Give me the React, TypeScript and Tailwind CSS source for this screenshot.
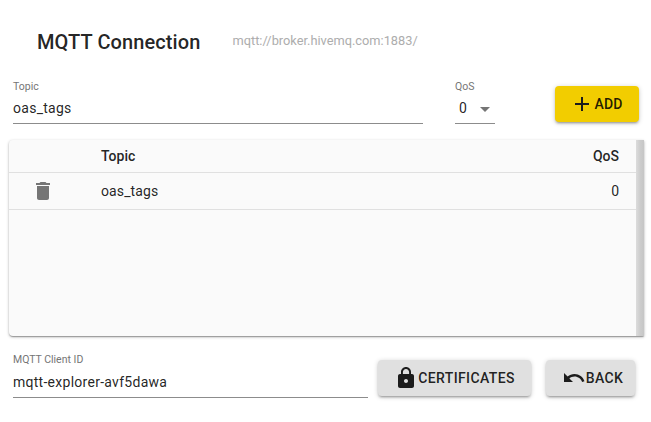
import React from "react";

const Icon = ({ d, className }: { d: string; className: string }) => (
  <svg viewBox="0 0 24 24" fill="currentColor" className={className}>
    <path d={d} />
  </svg>
);

const deletePath =
  "M6 19c0 1.1.9 2 2 2h8c1.1 0 2-.9 2-2V7H6v12zM19 4h-3.5l-1-1h-5l-1 1H5v2h14V4z";
const addPath = "M19 13h-6v6h-2v-6H5v-2h6V5h2v6h6v2z";
const lockPath =
  "M18 8h-1V6c0-2.76-2.24-5-5-5S7 3.24 7 6v2H6c-1.1 0-2 .9-2 2v10c0 1.1.9 2 2 2h12c1.1 0 2-.9 2-2V10c0-1.1-.9-2-2-2zm-6 9c-1.1 0-2-.9-2-2s.9-2 2-2 2 .9 2 2-.9 2-2 2zm3.1-9H8.9V6c0-1.71 1.39-3.1 3.1-3.1 1.71 0 3.1 1.39 3.1 3.1v2z";
const undoPath =
  "M12.5 8c-2.65 0-5.05.99-6.9 2.6L2 7v9h9l-3.62-3.62c1.39-1.16 3.16-1.88 5.12-1.88 3.54 0 6.55 2.31 7.6 5.5l2.37-.78C21.08 11.03 17.15 8 12.5 8z";

const buttonShadow =
  "shadow-[0_1px_5px_0_rgba(0,0,0,0.2),0_2px_2px_0_rgba(0,0,0,0.14),0_3px_1px_-2px_rgba(0,0,0,0.12)]";

interface FieldProps {
  label: string;
  value: string;
  className: string;
  inputClassName: string;
}

const Field = ({ label, value, className, inputClassName }: FieldProps) => (
  <div className={`flex flex-col ${className}`}>
    <span className="h-[15px] text-[10.5px] leading-[15px] text-[#757575]">{label}</span>
    <span
      className={`border-b border-[#8c8c8c] text-[14px] leading-[20px] tracking-[0.27px] text-[rgba(0,0,0,0.87)] ${inputClassName}`}
    >
      {value}
    </span>
  </div>
);

const App = () => {
  return (
    <div className="flex h-[422px] w-[651px] flex-col bg-white font-['Roboto',sans-serif] text-[rgba(0,0,0,0.87)]">
      <div className="flex h-[79px] items-start pl-[37px] pt-[29px]">
        <h1 className="text-[20px] leading-[26px] font-medium tracking-[0.1px]">MQTT Connection</h1>
        <span className="ml-[32px] text-[12.8px] leading-[24px] text-[#adadad]">mqtt://broker.hivemq.com:1883/</span>
      </div>

      <div className="flex h-[61px] items-start pl-[13px]">
        <Field label="Topic" value="oas_tags" className="w-[410px]" inputClassName="h-[30px] pt-[4px]" />
        <div className="ml-[32px] flex w-[40px] flex-col">
          <span className="h-[15px] text-[10.5px] leading-[15px] text-[#757575]">QoS</span>
          <div className="flex h-[30px] items-center justify-between border-b border-[#8c8c8c] pl-[4px] pr-[5px] text-[14px]">
            <span>0</span>
            <span className="mt-[1px] h-0 w-0 border-x-[5px] border-t-[5px] border-x-transparent border-t-[#757575]" />
          </div>
        </div>
        <button
          className={`ml-[60px] mt-[7px] flex h-[36px] w-[84px] items-center justify-center rounded-[4px] bg-[#f2cd00] text-[14px] font-medium tracking-[0.2px] ${buttonShadow}`}
        >
          <Icon d={addPath} className="-ml-[1px] h-6 w-6 text-[#1c1c1c]" />
          <span>ADD</span>
        </button>
      </div>

      <div className="ml-[9px] flex h-[196px] w-[635px] overflow-hidden rounded-l-[4px] bg-[#fafafa] shadow-[0_1px_3px_0_rgba(0,0,0,0.3),0_1px_1px_0_rgba(0,0,0,0.14),0_2px_1px_-1px_rgba(0,0,0,0.12)]">
        <div className="flex-1 text-[14px]">
          <div className="flex h-[33px] items-center border-b border-[#e0e0e0] pl-[92px] pr-[17px] font-medium">
            <span className="flex-1">Topic</span>
            <span>QoS</span>
          </div>
          <div className="flex h-[37px] items-center border-b border-[#e0e0e0] pr-[17px]">
            <span className="flex w-[92px] justify-center pr-[24px]">
              <Icon d={deletePath} className="h-6 w-6 text-[#757575]" />
            </span>
            <span className="flex-1 tracking-[0.1px]">oas_tags</span>
            <span>0</span>
          </div>
        </div>
        <div className="w-[8px] bg-gradient-to-r from-[#dcdcdc] via-[#cdcdcd] to-[#c6c6c6]" />
      </div>

      <div className="flex items-start pl-[13px] pt-[16px]">
        <Field
          label="MQTT Client ID"
          value="mqtt-explorer-avf5dawa"
          className="w-[355px]"
          inputClassName="h-[31px] pt-[5px]"
        />
        <button
          className={`ml-[10px] mt-[8px] flex h-[36px] w-[153px] items-center justify-center rounded-[4px] bg-[#e0e0e0] text-[14px] font-medium tracking-[0.38px] ${buttonShadow}`}
        >
          <Icon d={lockPath} className="h-6 w-6 text-[#1c1c1c]" />
          <span>CERTIFICATES</span>
        </button>
        <button
          className={`ml-[15px] mt-[8px] flex h-[36px] w-[89px] items-center justify-center rounded-[4px] bg-[#e0e0e0] pl-[4px] text-[14px] font-medium tracking-[0.38px] ${buttonShadow}`}
        >
          <Icon d={undoPath} className="h-6 w-6 text-[#1c1c1c]" />
          <span>BACK</span>
        </button>
      </div>
    </div>
  );
};

export default App;
